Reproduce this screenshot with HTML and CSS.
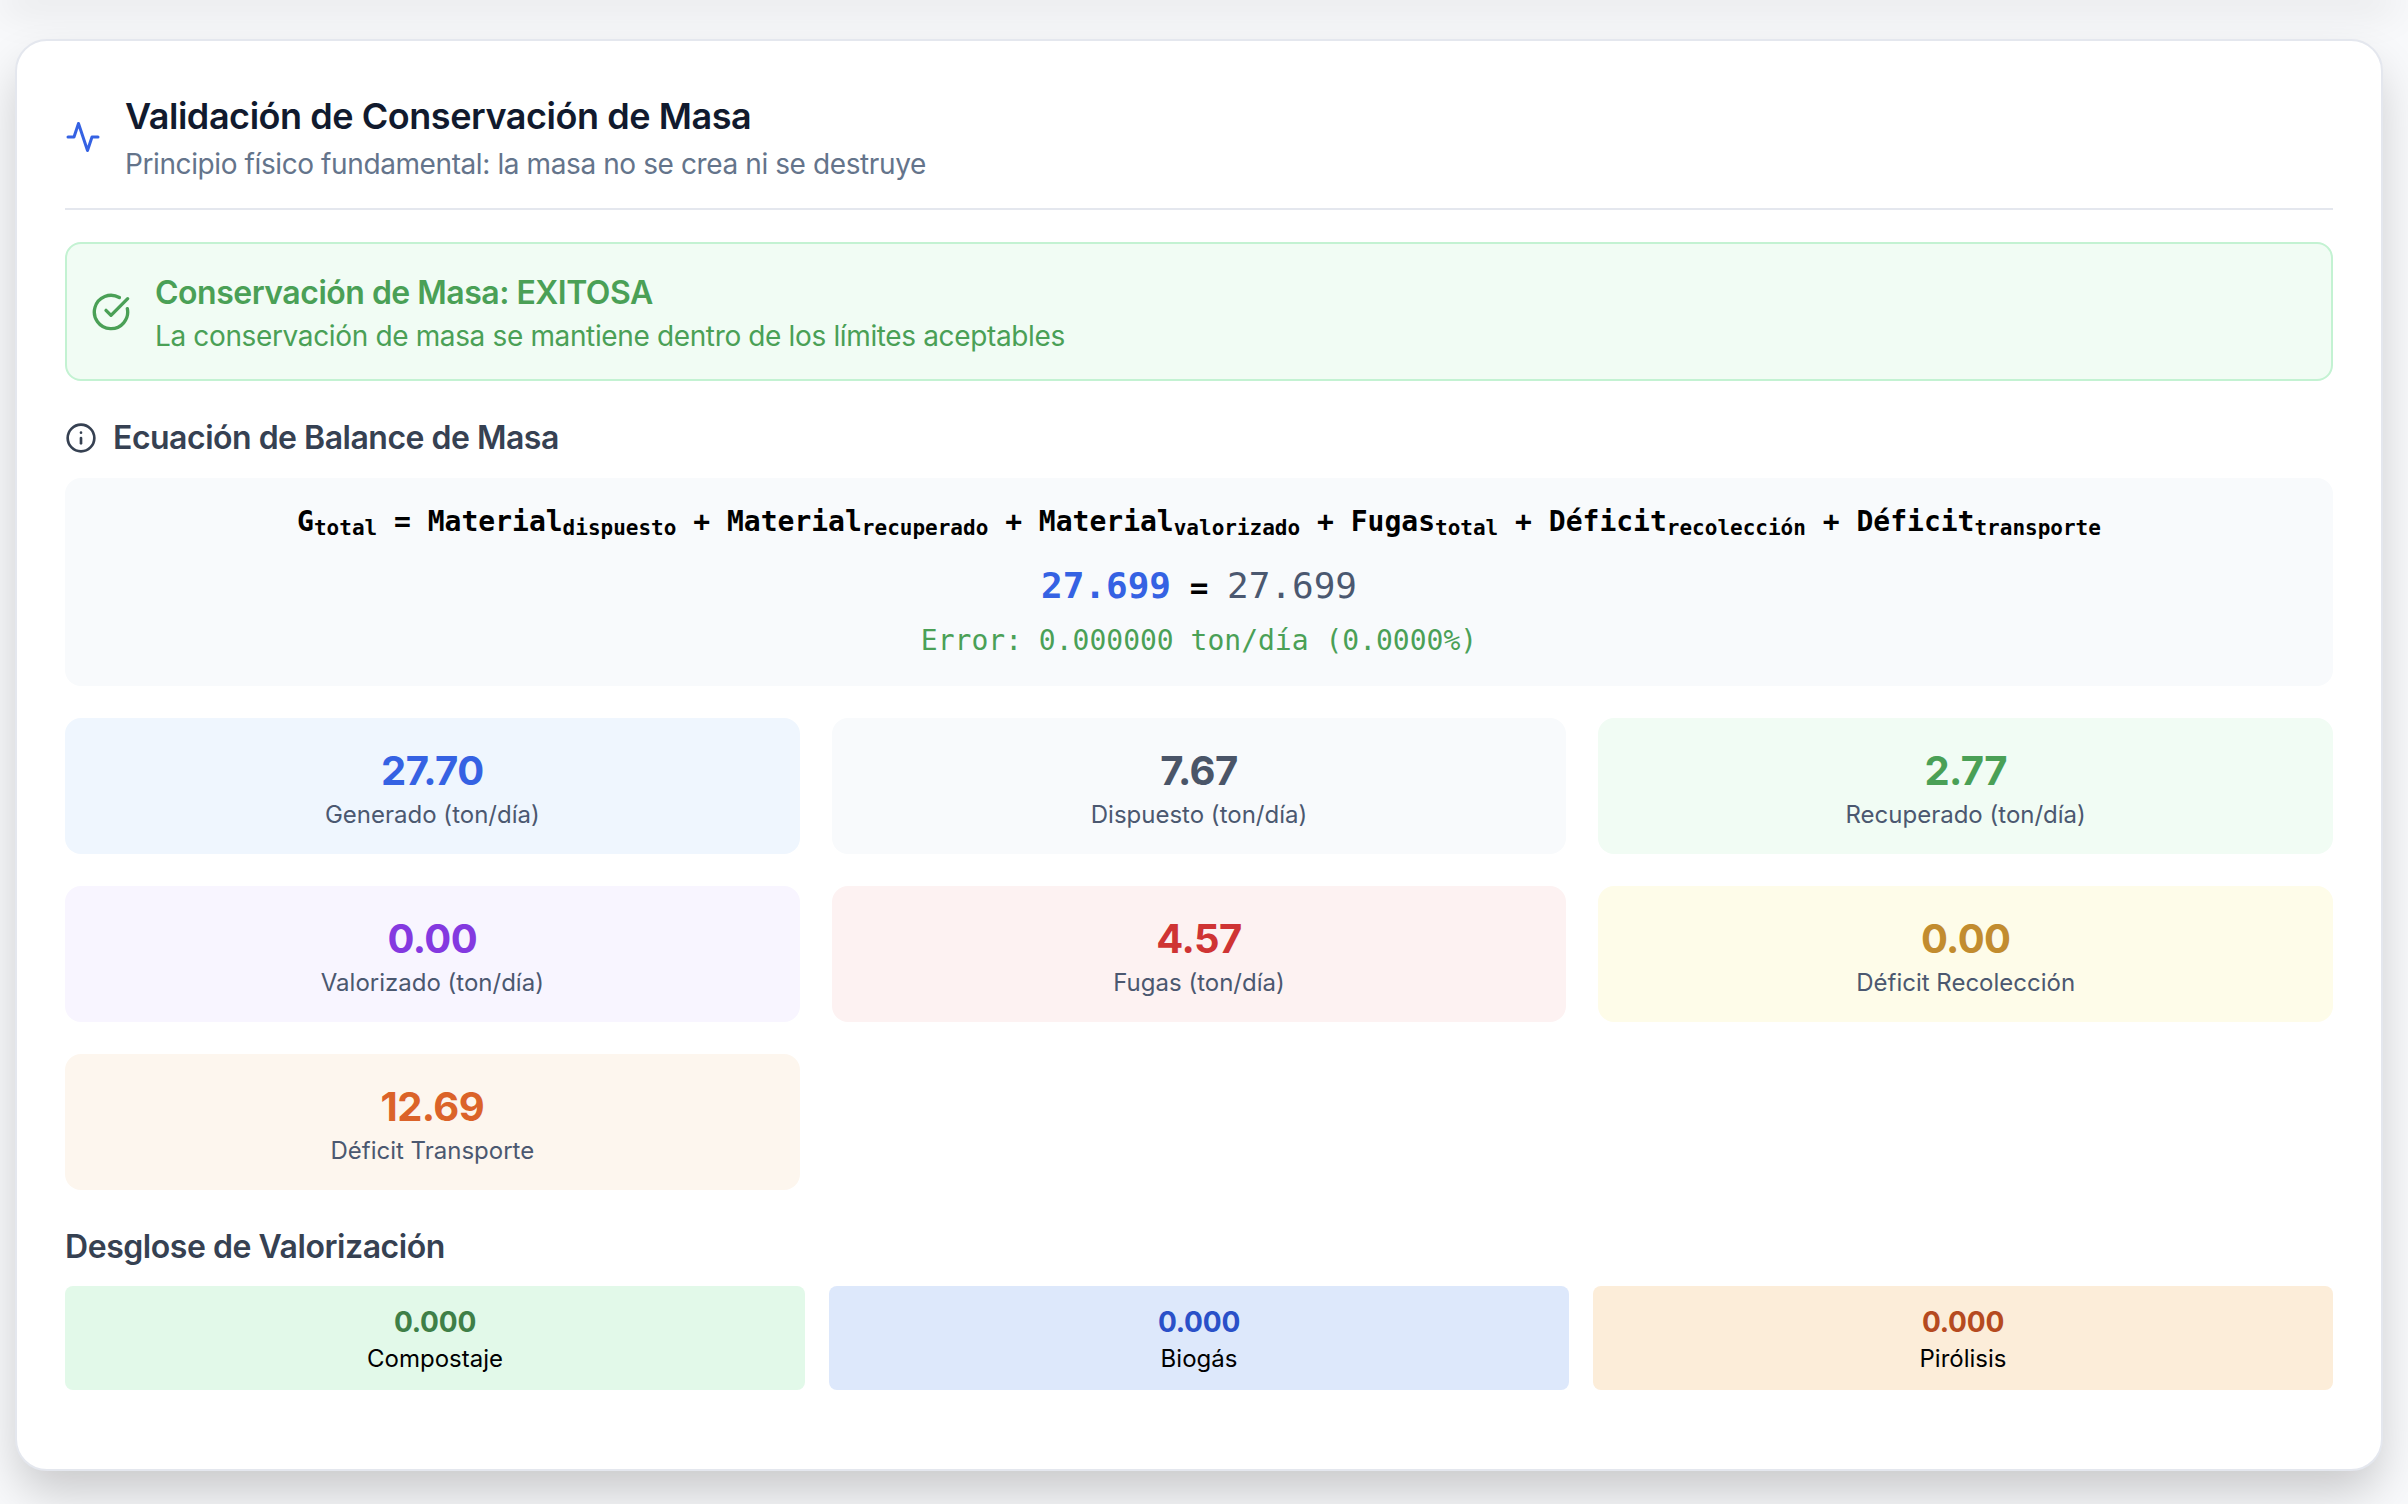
FILE: index.html
```html
<!DOCTYPE html>
<html lang="es">
<head>
  <meta charset="UTF-8" />
  <title>Validación de Conservación de Masa</title>
  <link rel="stylesheet" href="styles.css">
</head>
<body>
  <div class="prev-card"></div>
  <div class="card">
    <div class="header">
      <svg class="icon-activity" viewBox="0 0 24 24"><path d="M22 12h-4l-3 9L9 3l-3 9H2"/></svg>
      <div>
        <h1>Validación de Conservación de Masa</h1>
        <p class="subtitle">Principio físico fundamental: la masa no se crea ni se destruye</p>
      </div>
    </div>

    <div class="alert">
      <svg class="icon-check" viewBox="0 0 24 24"><path d="M21.801 10A10 10 0 1 1 17 3.335"/><path d="m9 11 3 3L22 4"/></svg>
      <div>
        <div class="alert-title">Conservación de Masa: EXITOSA</div>
        <div class="alert-text">La conservación de masa se mantiene dentro de los límites aceptables</div>
      </div>
    </div>

    <h2 class="section-title">
      <svg class="icon-info" viewBox="0 0 24 24"><circle cx="12" cy="12" r="10"/><path d="M12 16v-4"/><path d="M12 8h.01"/></svg>
      Ecuación de Balance de Masa
    </h2>
    <div class="equation">
      <div class="eq-formula">G<sub>total</sub> = Material<sub>dispuesto</sub> + Material<sub>recuperado</sub> + Material<sub>valorizado</sub> + Fugas<sub>total</sub> + Déficit<sub>recolección</sub> + Déficit<sub>transporte</sub></div>
      <div class="eq-values"><span class="eq-left">27.699</span> = <span class="eq-right">27.699</span></div>
      <div class="eq-error">Error: 0.000000 ton/día (0.0000%)</div>
    </div>

    <div class="stats">
      <div class="stat bg-blue"><div class="stat-value c-blue">27.70</div><div class="stat-label">Generado (ton/día)</div></div>
      <div class="stat bg-gray"><div class="stat-value c-gray">7.67</div><div class="stat-label">Dispuesto (ton/día)</div></div>
      <div class="stat bg-green"><div class="stat-value c-green">2.77</div><div class="stat-label">Recuperado (ton/día)</div></div>
      <div class="stat bg-purple"><div class="stat-value c-purple">0.00</div><div class="stat-label">Valorizado (ton/día)</div></div>
      <div class="stat bg-red"><div class="stat-value c-red">4.57</div><div class="stat-label">Fugas (ton/día)</div></div>
      <div class="stat bg-yellow"><div class="stat-value c-yellow">0.00</div><div class="stat-label">Déficit Recolección</div></div>
      <div class="stat bg-orange"><div class="stat-value c-orange">12.69</div><div class="stat-label">Déficit Transporte</div></div>
    </div>

    <h2 class="section-title breakdown-title">Desglose de Valorización</h2>
    <div class="breakdown">
      <div class="item item-green"><div class="item-value">0.000</div><div class="item-label">Compostaje</div></div>
      <div class="item item-blue"><div class="item-value">0.000</div><div class="item-label">Biogás</div></div>
      <div class="item item-orange"><div class="item-value">0.000</div><div class="item-label">Pirólisis</div></div>
    </div>
  </div>
</body>
</html>
```

FILE: styles.css
```css
* {
  box-sizing: border-box;
}
body {
  margin: 0;
  height: 1504px;
  overflow: hidden;
  background: #f8f9fb;
  font-family: 'Inter', sans-serif;
  color: #111827;
}
.prev-card {
  height: 0;
  margin: 0 25px 0 15px;
  box-shadow: 0 0 40px 12px rgba(0, 0, 0, 0.09);
}
.card {
  margin: 39px 25px 0 15px;
  height: 1432px;
  padding: 48px;
  background: white;
  border: 2px solid #e4e7ee;
  border-radius: 32px;
  box-shadow: 0 24px 48px -4px rgba(0, 0, 0, 0.2);
}
.header {
  display: flex;
  align-items: center;
  gap: 24px;
  padding-bottom: 24px;
  border-bottom: 2px solid #e4e7ee;
  margin-bottom: 32px;
}
.header svg, .alert svg, .section-title svg {
  fill: none;
  stroke-linecap: round;
  stroke-linejoin: round;
  stroke-width: 2;
  flex-shrink: 0;
}
.icon-activity {
  width: 36px;
  height: 36px;
  stroke: #3562e3;
}
h1 {
  margin: 0;
  font-size: 36px;
  line-height: 55px;
  font-weight: 600;
  letter-spacing: -0.45px;
  color: #111a2e;
}
.subtitle {
  margin: 0;
  font-size: 28px;
  line-height: 40px;
  letter-spacing: -0.4px;
  color: #64748b;
}
.alert {
  display: flex;
  align-items: center;
  gap: 24px;
  padding: 24px;
  background: #f1fcf4;
  border: 2px solid #c3f2d2;
  border-radius: 16px;
  color: #4aa056;
  margin-bottom: 32px;
}
.icon-check {
  width: 40px;
  height: 40px;
  stroke: #4aa056;
}
.alert-title {
  font-size: 32px;
  line-height: 49px;
  font-weight: 600;
  letter-spacing: -0.5px;
}
.alert-text {
  font-size: 28px;
  line-height: 38px;
  letter-spacing: -0.36px;
}
.section-title {
  display: flex;
  align-items: center;
  gap: 16px;
  margin: 0 0 15px;
  font-size: 32px;
  line-height: 50px;
  font-weight: 600;
  letter-spacing: -0.5px;
  color: #364152;
}
.icon-info {
  width: 32px;
  height: 32px;
  stroke: #364152;
}
.equation {
  background: #f8fafc;
  border-radius: 16px;
  padding: 24px;
  height: 208px;
  margin-bottom: 32px;
  text-align: center;
  font-family: 'DejaVu Sans Mono', monospace;
}
.eq-formula {
  font-size: 28px;
  line-height: 40px;
  font-weight: 700;
  color: #000;
}
.eq-formula sub {
  font-size: 0.75em;
  line-height: 0;
  vertical-align: -4px;
}
.eq-values {
  margin-top: 20px;
  font-size: 31px;
  line-height: 48px;
  font-weight: 700;
  color: #000;
}
.eq-left, .eq-right {
  font-size: 36px;
}
.eq-left {
  color: #3562e3;
}
.eq-right {
  font-weight: 400;
  color: #4b5870;
}
.eq-error {
  margin-top: 10px;
  font-size: 28px;
  line-height: 40px;
  color: #4aa056;
}
.stats {
  display: grid;
  grid-template-columns: repeat(3, 1fr);
  gap: 32px;
}
.stat {
  height: 136px;
  padding: 29px 24px 0;
  border-radius: 16px;
  text-align: center;
}
.stat-value {
  font-size: 40px;
  line-height: 48px;
  font-weight: 700;
  letter-spacing: -0.6px;
}
.stat-label {
  font-size: 24px;
  line-height: 40px;
  color: #4b5870;
}
.bg-blue { background: #eff6fe; }
.bg-gray { background: #f8fafc; }
.bg-green { background: #f1fcf4; }
.bg-purple { background: #f8f5ff; }
.bg-red { background: #fdf2f2; }
.bg-yellow { background: #fefce9; }
.bg-orange { background: #fdf6ee; }
.c-blue { color: #3562e3; }
.c-gray { color: #4a5568; }
.c-green { color: #4aa056; }
.c-purple { color: #8439e0; }
.c-red { color: #cf3434; }
.c-yellow { color: #c28c2f; }
.c-orange { color: #db6329; }
.breakdown-title {
  margin: 32px 0 14px;
  letter-spacing: -0.45px;
}
.breakdown {
  display: grid;
  grid-template-columns: repeat(3, 1fr);
  gap: 24px;
}
.item {
  height: 104px;
  padding: 16px;
  border-radius: 8px;
  text-align: center;
}
.item-value {
  font-size: 28px;
  line-height: 40px;
  font-weight: 700;
  letter-spacing: -0.2px;
}
.item-label {
  font-size: 24px;
  line-height: 33px;
  color: #000;
}
.item-green { background: #e2f9e9; }
.item-green .item-value { color: #3f7f47; }
.item-blue { background: #dde8fb; }
.item-blue .item-value { color: #2a50c8; }
.item-orange { background: #fcedd9; }
.item-orange .item-value { color: #b54a20; }
```
